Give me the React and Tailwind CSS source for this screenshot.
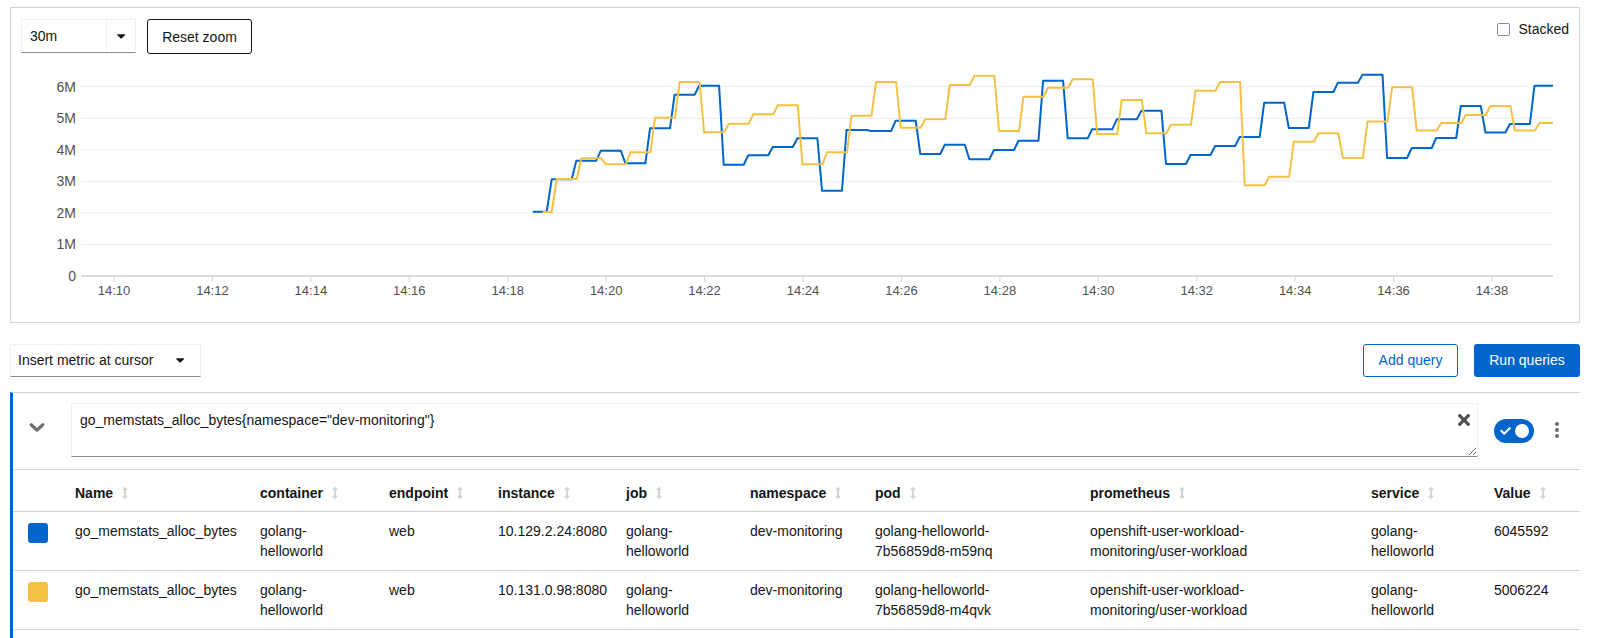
import React from 'react';

// chart drawn in page coordinates, shifted to the svg origin
const OX = 11;
const OY = 54;
const STEP = 24.57;
const Y0 = 276;
const PER_M = 31.55;

const BLUE = [179.3, 160.7, 150.7, 163.3, 128.3, 94.7, 85.7, 164.7, 155.3, 147, 138.3, 190.7, 130, 131, 120.7, 154, 144.7, 159.3, 150, 140.7, 80.7, 138.3, 129.3, 119.3, 110.7, 164, 155, 146, 137, 102.7, 128, 92, 82.7, 74.7, 158, 148, 138, 106, 132.5, 124, 85.7];
const YELLOW = [179, 158.3, 164.3, 152.3, 117.7, 82, 132.3, 123.7, 114.3, 105.3, 164.3, 152.3, 115.7, 82, 127.7, 119.3, 85, 75.7, 131, 96.7, 87.7, 79.3, 134, 100, 133.3, 124.7, 90.7, 82, 185.3, 176.7, 141.7, 133.3, 158, 121.5, 87.3, 130.5, 123, 115, 106, 130.5, 123];

const buildLine = (x0, x1, y0, xStart, values) => {
  const pts = [[x0, y0], [x1, y0]];
  values.forEach((y, i) => {
    const x = xStart + i * STEP;
    pts.push([x, y], [Math.min(x + 20, 1553), y]);
  });
  return pts.map(([x, y], i) => `${i ? 'L' : 'M'}${(x - OX).toFixed(1)} ${(y - OY).toFixed(1)}`).join(' ');
};

const Caret = ({ className = '' }) => (
  <svg className={className} width="8" height="5" viewBox="4 190 300 172" fill="#151515">
    <path d="M31.3 192h257.3c17.8 0 26.7 21.5 14.1 34.1L174.1 354.8c-7.8 7.8-20.5 7.8-28.3 0L17.2 226.1C4.6 213.5 13.5 192 31.3 192z" />
  </svg>
);

const SortIcon = () => (
  <svg width="6" height="12" viewBox="0 0 256 512" fill="#d2d2d2">
    <path d="M214.059 377.941H168V134.059h46.059c21.382 0 32.09-25.851 16.971-40.971L144.971 7.029c-9.373-9.373-24.568-9.373-33.941 0L24.971 93.088c-15.119 15.119-4.411 40.971 16.971 40.971H88v243.882H41.941c-21.382 0-32.09 25.851-16.971 40.971l86.059 86.059c9.373 9.373 24.568 9.373 33.941 0l86.059-86.059c15.12-15.119 4.412-40.971-16.97-40.971z" />
  </svg>
);

const Chart = () => {
  const yTicks = [0, 1, 2, 3, 4, 5, 6];
  const xTicks = Array.from({ length: 15 }, (_, i) => i);
  return (
    <svg width="1568" height="268" className="block">
      {yTicks.map((k) => {
        const y = Y0 - k * PER_M - OY;
        return (
          <g key={k}>
            <line x1={70} x2={1542} y1={y} y2={y} stroke={k === 0 ? '#d2d2d2' : '#ececec'} strokeWidth={k === 0 ? 1.6 : 1} />
            <text x={65} y={y} textAnchor="end" dominantBaseline="central" fontSize="14" fill="#4f5255" fontFamily="'Liberation Sans', Arial, sans-serif">
              {k === 0 ? '0' : `${k}M`}
            </text>
          </g>
        );
      })}
      {xTicks.map((i) => {
        const x = 114 + i * 98.43 - OX;
        return (
          <g key={i}>
            <line x1={x} x2={x} y1={Y0 - OY} y2={Y0 - OY + 6} stroke="#d2d2d2" strokeWidth="1" />
            <text x={x} y={290 - OY} textAnchor="middle" dominantBaseline="central" fontSize="13" fill="#4f5255" fontFamily="'Liberation Sans', Arial, sans-serif">
              {`14:${10 + i * 2}`}
            </text>
          </g>
        );
      })}
      <path d={buildLine(532.7, 546.7, 211.7, 551.7, BLUE)} fill="none" stroke="#0066cc" strokeWidth="2" strokeLinejoin="round" />
      <path d={buildLine(542.7, 551.7, 212, 556.7, YELLOW)} fill="none" stroke="#f4c145" strokeWidth="2" strokeLinejoin="round" />
    </svg>
  );
};

const columns = ['Name', 'container', 'endpoint', 'instance', 'job', 'namespace', 'pod', 'prometheus', 'service', 'Value'];

const rows = [
  {
    color: 'bg-[#0066cc]',
    cells: ['go_memstats_alloc_bytes', ['golang-', 'helloworld'], 'web', '10.129.2.24:8080', ['golang-', 'helloworld'], 'dev-monitoring', ['golang-helloworld-', '7b56859d8-m59nq'], ['openshift-user-workload-', 'monitoring/user-workload'], ['golang-', 'helloworld'], '6045592'],
  },
  {
    color: 'bg-[#f4c145]',
    cells: ['go_memstats_alloc_bytes', ['golang-', 'helloworld'], 'web', '10.131.0.98:8080', ['golang-', 'helloworld'], 'dev-monitoring', ['golang-helloworld-', '7b56859d8-m4qvk'], ['openshift-user-workload-', 'monitoring/user-workload'], ['golang-', 'helloworld'], '5006224'],
  },
];

const gridCols = 'grid grid-cols-[62px_185px_129px_109px_128px_124px_125px_215px_281px_123px_86px]';

const App = () => {
  return (
    <div className="w-[1598px] min-h-[660px] bg-white font-['Liberation_Sans',Arial,sans-serif] text-[14px] text-[#151515]">
      {/* Graph panel */}
      <div className="ml-[10px] mt-[7px] w-[1570px] h-[316px] border border-[#d2d2d2] flex flex-col">
        <div className="h-[46px] pt-[11px] pl-[10px] pr-[10px] flex items-start justify-between">
          <div className="flex items-start gap-[11px]">
            <div className="flex h-[34px] w-[115px] border border-[#f0f0f0] border-b-[#8a8d90]">
              <span className="flex-1 pl-[8px] leading-[32px]">30m</span>
              <span className="w-[29px] border-l border-[#f0f0f0] flex items-center justify-center">
                <Caret />
              </span>
            </div>
            <button className="h-[35px] w-[105px] rounded-[3px] border border-[#151515] leading-[20px]">Reset zoom</button>
          </div>
          <label className="mt-[2px] flex items-center gap-[8px] leading-[16px]">
            <span className="w-[13px] h-[13px] rounded-[2px] border border-[#8a8d90] bg-white" />
            <span>Stacked</span>
          </label>
        </div>
        <Chart />
      </div>

      {/* Toolbar */}
      <div className="ml-[10px] mt-[21px] w-[1570px] h-[33px] flex items-start justify-between">
        <div className="h-[33px] w-[191px] border border-[#f0f0f0] border-b-[#8a8d90] flex items-center justify-between pl-[7px] pr-[16px]">
          <span>Insert metric at cursor</span>
          <Caret />
        </div>
        <div className="flex gap-[16px]">
          <button className="h-[33px] w-[95px] rounded-[3px] border border-[#0066cc] text-[#0066cc]">Add query</button>
          <button className="h-[33px] w-[106px] rounded-[3px] bg-[#0066cc] text-white">Run queries</button>
        </div>
      </div>

      {/* Query */}
      <div className="ml-[10px] mt-[15px] w-[1570px] border-t border-[#d2d2d2] border-l-[3px] border-l-[#0066cc]">
        <div className="flex items-start pt-[10px] pl-[16px]">
          <svg className="mt-[20px]" width="16" height="9" viewBox="0 0 16 9">
            <path d="M2.2 1.8 L8 7.1 L13.8 1.8" fill="none" stroke="#6a6e73" strokeWidth="3.3" strokeLinecap="round" strokeLinejoin="round" />
          </svg>
          <div className="relative ml-[26px] w-[1407px]">
            <textarea
              readOnly
              defaultValue={'go_memstats_alloc_bytes{namespace="dev-monitoring"}'}
              className="block w-full h-[54px] resize-y outline-none border border-[#f0f0f0] border-b-[#8a8d90] px-[8px] py-[6px] pr-[32px] leading-[20px] text-[14px] text-[#151515] font-['Liberation_Sans',Arial,sans-serif]"
            />
            <svg className="absolute right-[8px] top-[11px]" width="12" height="12" viewBox="0 80 352 352" fill="#4f5255">
              <path d="M242.72 256l100.07-100.07c12.28-12.28 12.28-32.19 0-44.48l-22.24-22.24c-12.28-12.28-32.19-12.28-44.48 0L176 189.28 75.930 89.21c-12.28-12.28-32.19-12.28-44.48 0L9.21 111.45c-12.28 12.280-12.28 32.19 0 44.48L109.28 256 9.21 356.07c-12.28 12.28-12.28 32.19 0 44.48l22.24 22.24c12.28 12.28 32.2 12.28 44.48 0L176 322.72l100.07 100.07c12.28 12.28 32.2 12.28 44.48 0l22.24-22.24c12.28-12.28 12.28-32.19 0-44.48L242.72 256z" />
            </svg>
          </div>
          <div className="ml-[16px] mt-[16px] w-[40px] h-[24px] rounded-full bg-[#0066cc] flex items-center justify-between pl-[6px] pr-[5px]">
            <svg width="11" height="8" viewBox="0 64 512 384" fill="white">
              <path d="M173.898 439.404l-166.4-166.4c-9.997-9.997-9.997-26.206 0-36.204l36.203-36.204c9.997-9.998 26.207-9.998 36.204 0L192 312.69 432.095 72.596c9.997-9.997 26.206-9.997 36.204 0l36.203 36.204c9.997 9.997 9.997 26.206 0 36.204l-294.4 294.401c-9.998 9.997-26.207 9.997-36.204-.001z" />
            </svg>
            <span className="w-[14px] h-[14px] rounded-full bg-white" />
          </div>
          <svg className="ml-[21px] mt-[19px]" width="4" height="16" viewBox="0 0 4 16" fill="#6a6e73">
            <circle cx="2" cy="2" r="2" />
            <circle cx="2" cy="8" r="2" />
            <circle cx="2" cy="14" r="2" />
          </svg>
        </div>

        {/* Series table */}
        <div className="mt-[12px] border-t border-[#d2d2d2]">
          <div className={`${gridCols} border-b border-[#d2d2d2] pt-[13px] pb-[8px] leading-[20px] font-bold`}>
            <div />
            {columns.map((c) => (
              <div key={c} className="flex items-center gap-[9px]">
                <span>{c}</span>
                <SortIcon />
              </div>
            ))}
          </div>
          {rows.map((r, ri) => (
            <div key={ri} className={`${gridCols} border-b border-[#d2d2d2] py-[9px] leading-[20px]`}>
              <div className="pl-[15px] pt-[2px]">
                <div className={`w-[20px] h-[20px] rounded-[3px] ${r.color}`} />
              </div>
              {r.cells.map((c, ci) => (
                <div key={ci}>
                  {Array.isArray(c) ? (
                    <>
                      {c[0]}
                      <br />
                      {c[1]}
                    </>
                  ) : (
                    c
                  )}
                </div>
              ))}
            </div>
          ))}
          <div className="h-[30px]" />
        </div>
      </div>
    </div>
  );
};

export default App;
